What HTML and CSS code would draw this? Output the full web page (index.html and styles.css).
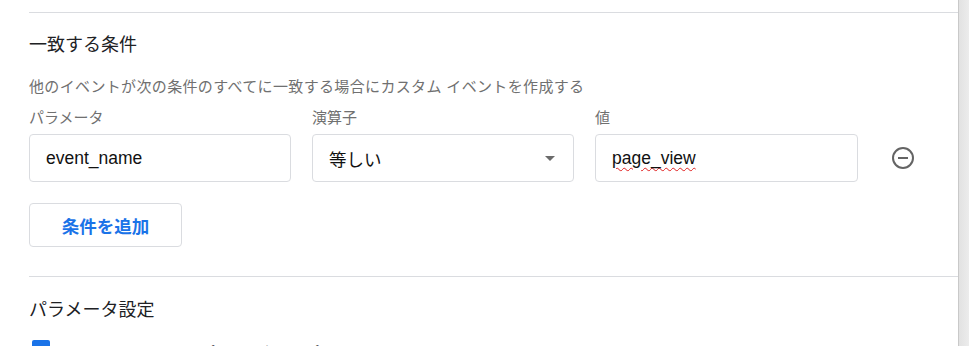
FILE: index.html
```html
<!DOCTYPE html>
<html lang="ja">
<head>
    <meta charset="UTF-8">
    <title>カスタム イベントの作成</title>
    <link rel="stylesheet" href="styles.css">
</head>
<body>
<div class="page">
    <div class="card">
        <div class="divider first"></div>
        <h2 class="section-title">一致する条件</h2>
        <p class="hint">他のイベントが次の条件のすべてに一致する場合にカスタム イベントを作成する</p>
        <div class="conditions">
            <label class="field-label">パラメータ</label>
            <label class="field-label">演算子</label>
            <label class="field-label">値</label>
            <span></span>
            <div class="field"><span>event_name</span></div>
            <div class="field select">
                <span>等しい</span>
                <span class="caret"></span>
            </div>
            <div class="field"><span class="misspelled">page_view</span></div>
            <button class="remove-btn" title="削除">
                <svg width="24" height="24" viewBox="0 0 24 24">
                    <circle cx="12" cy="12" r="10" fill="none" stroke="#646464" stroke-width="2"/>
                    <path d="M7 12h10" stroke="#646464" stroke-width="2"/>
                </svg>
            </button>
        </div>
        <button class="add-btn">条件を追加</button>
        <div class="divider"></div>
        <h2 class="section-title second">パラメータ設定</h2>
        <label class="check-row">
            <span class="checkbox"></span>
            <span class="check-text">ソース イベントからパラメータをコピー</span>
        </label>
    </div>
    <div class="gutter"></div>
</div>
</body>
</html>
```

FILE: styles.css
```css
body { margin: 0; font-family: "Liberation Sans", "Noto Sans CJK JP", sans-serif; color: #202124; background: #fff; }
.page { display: flex; height: 346px; overflow: hidden; }
.card { flex: 1; padding-left: 29px; border-right: 1px solid #c9c9c9; }
.gutter { width: 10px; background: linear-gradient(to right, #e2e2e2, #ececec); }

.divider { border-top: 1px solid #dadce0; margin-top: 29px; }
.divider.first { margin-top: 12px; }

.section-title { font-size: 18px; font-weight: normal; line-height: 24px; margin: 20px 0 0; }
.section-title.second { margin-top: 21px; }

.hint { font-size: 15px; line-height: 20px; color: #707070; margin: 20px 0 0; letter-spacing: 0.35px; }

.conditions {
    display: grid;
    grid-template-columns: 262px 262px 263px auto;
    column-gap: 21px;
    row-gap: 6px;
    align-items: center;
    margin-top: 11px;
}
.field-label { font-size: 15px; line-height: 20px; color: #707070; }
.field {
    height: 46px;
    border: 1px solid #dadce0;
    border-radius: 4px;
    display: flex;
    align-items: center;
    padding: 0 16px;
    font-size: 17.5px;
    color: #111;
}
.field.select { justify-content: space-between; padding-right: 18px; }
.caret { width: 0; height: 0; border-left: 5px solid transparent; border-right: 5px solid transparent; border-top: 5px solid #6b6b6b; }
.misspelled { text-decoration: underline wavy #e02020; text-underline-offset: 3px; text-decoration-thickness: 1px; }

.remove-btn { border: none; background: none; padding: 0; margin-left: 12px; width: 24px; height: 24px; cursor: pointer; }
.remove-btn svg { display: block; }

.add-btn {
    display: block;
    margin-top: 21px;
    width: 153px;
    height: 44px;
    border: 1px solid #dadce0;
    border-radius: 4px;
    background: #fff;
    color: #1a73e8;
    font-family: inherit;
    font-size: 17.5px;
    font-weight: bold;
    cursor: pointer;
}

.check-row { display: flex; align-items: flex-start; gap: 12px; margin: 18px 0 0 3px; font-size: 15px; line-height: 20px; }
.check-text { padding-top: 3px; }
.checkbox { width: 18px; height: 18px; border-radius: 2px; background: #1a73e8; flex-shrink: 0; }
```
